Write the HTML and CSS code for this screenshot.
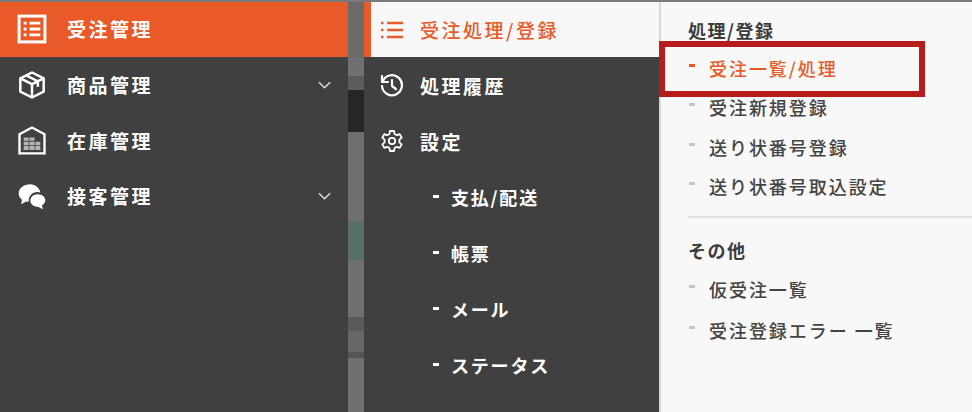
FILE: index.html
```html
<!DOCTYPE html>
<html lang="ja">
<head>
    <meta charset="UTF-8">
    <title>受注管理メニュー</title>
    <link rel="stylesheet" href="styles.css">
</head>
<body>
    <div class="menu">
        <div class="main-nav">
            <div class="main-item active">
                <svg class="main-icon" viewBox="0 0 36 36" fill="none" stroke="currentColor">
                    <rect x="2.500" y="2.500" width="31" height="31" stroke-width="3.600"/>
                    <path d="M8 11h3.500M15 11h13M8 18h3.500M15 18h13M8 25h3.500M15 25h13" stroke-width="3.400"/>
                </svg>
                <span>受注管理</span>
            </div>
            <div class="main-item">
                <svg class="main-icon" viewBox="0 0 36 36" fill="none" stroke="currentColor" stroke-width="3" stroke-linejoin="round">
                    <path d="M18 3 32 10V26L18 33 4 26V10Z"/>
                    <path d="M4 10 18 17 32 10M18 17V33M11 6.500 25 13.500V20"/>
                </svg>
                <span>商品管理</span>
                <svg class="chevron" viewBox="0 0 14 8" fill="none" stroke="currentColor" stroke-width="1.500"><path d="M1 1l6 6 6-6"/></svg>
            </div>
            <div class="main-item">
                <svg class="main-icon" viewBox="0 0 36 36" fill="none">
                    <path d="M3 34V11L18 3 33 11V34Z" stroke="currentColor" stroke-width="2.800"/>
                    <path d="M8 15h6v4H8zM15 15h6v4h-6zM8 20h6v4H8zM15 20h6v4h-6zM22 20h6v4h-6zM8 25h6v5H8zM15 25h6v5h-6zM22 25h6v5h-6z" fill="#b5b5b5"/>
                </svg>
                <span>在庫管理</span>
            </div>
            <div class="main-item">
                <svg class="main-icon" viewBox="0 0 36 36" fill="currentColor">
                    <path d="M16 4C8 4 2 9 2 15c0 3 1.500 5.600 4 7.500L5 28l6-3.500c1 .2 1.600.3 3 .3-.6-7 5-12 11-11.500 1 0 2 .2 3 .6C27 8.500 22 4 16 4Z"/>
                    <path d="M25 16c-5 0-9 3.300-9 7.500S20 31 25 31l6 3-1-5c2.500-1.300 4-3.300 4-5.500 0-4.200-4-7.500-9-7.500Z"/>
                </svg>
                <span>接客管理</span>
                <svg class="chevron" viewBox="0 0 14 8" fill="none" stroke="currentColor" stroke-width="1.500"><path d="M1 1l6 6 6-6"/></svg>
            </div>
        </div>

        <div class="strip">
            <div class="seg seg-a"></div>
            <div class="seg seg-b"></div>
            <div class="seg seg-c"></div>
            <div class="seg seg-d"></div>
            <div class="seg seg-e"></div>
            <div class="seg seg-f"></div>
            <div class="seg seg-g"></div>
            <div class="seg seg-h"></div>
            <div class="seg seg-i"></div>
            <div class="seg seg-j"></div>
            <div class="seg seg-k"></div>
        </div>

        <div class="sub-nav">
            <div class="sub-item active">
                <svg class="sub-icon" viewBox="0 0 24 24" fill="none" stroke="currentColor" stroke-width="2.400">
                    <path d="M1 5h2.500M1 12h2.500M1 19h2.500M7 5h16M7 12h16M7 19h16"/>
                </svg>
                <span>受注処理/登録</span>
            </div>
            <div class="sub-item">
                <svg class="sub-icon" viewBox="0 0 24 24" fill="none" stroke="currentColor" stroke-width="2.200" stroke-linecap="round" stroke-linejoin="round">
                    <path d="M2 3v6h6"/>
                    <path d="M2.500 9A10 10 0 1 1 2 13"/>
                    <path d="M12 7v6l4 3"/>
                </svg>
                <span>処理履歴</span>
            </div>
            <div class="sub-item">
                <svg class="sub-icon" viewBox="0 0 24 24" fill="none" stroke="currentColor" stroke-width="1.800" stroke-linejoin="round">
                    <circle cx="12" cy="12" r="3.200"/>
                    <path d="M10 2h4l.6 3 2.200 1.200 2.900-1 2 3.400-2.300 2 0 2.800 2.300 2-2 3.400-2.900-1-2.200 1.200-.6 3h-4l-.6-3-2.200-1.200-2.900 1-2-3.400 2.300-2 0-2.800-2.300-2 2-3.400 2.900 1L9.400 5Z"/>
                </svg>
                <span>設定</span>
            </div>
            <div class="sub-child"><i class="dash"></i><span>支払/配送</span></div>
            <div class="sub-child"><i class="dash"></i><span>帳票</span></div>
            <div class="sub-child"><i class="dash"></i><span>メール</span></div>
            <div class="sub-child"><i class="dash"></i><span>ステータス</span></div>
        </div>

        <div class="panel">
            <div class="group">
                <div class="group-title">処理/登録</div>
                <div class="link current"><i class="dash"></i><span>受注一覧/処理</span></div>
                <div class="link"><i class="dash"></i><span>受注新規登録</span></div>
                <div class="link"><i class="dash"></i><span>送り状番号登録</span></div>
                <div class="link"><i class="dash"></i><span>送り状番号取込設定</span></div>
            </div>
            <div class="group group-other">
                <div class="group-title">その他</div>
                <div class="link"><i class="dash"></i><span>仮受注一覧</span></div>
                <div class="link"><i class="dash"></i><span>受注登録エラー 一覧</span></div>
            </div>
            <div class="highlight"></div>
        </div>
    </div>
</body>
</html>
```

FILE: styles.css
```css
* {
    box-sizing: border-box;
}

body {
    margin: 0;
    width: 972px;
    height: 412px;
    overflow: hidden;
    font-family: "Noto Sans CJK JP", "Noto Sans", sans-serif;
    font-weight: 500;
}

.menu {
    display: flex;
    height: 412px;
    border-top: 2px solid #7a7a7a;
    background-color: #404040;
}

/* left column */
.main-nav {
    width: 348px;
    background-color: #404040;
    color: #ffffff;
}

.main-item {
    display: flex;
    align-items: center;
    height: 55.500px;
    padding: 0 17px;
    font-size: 19px;
    font-weight: 700;
    letter-spacing: 2.500px;
}

.main-item.active {
    height: 55px;
    padding-bottom: 2px;
    background-color: #e95a28;
}

.main-icon {
    width: 30px;
    height: 30px;
    margin-right: 20px;
    flex-shrink: 0;
}

.chevron {
    width: 13px;
    height: 8px;
    margin-left: auto;
    color: #dddddd;
}

/* page behind the menu, seen through the gap */
.strip {
    display: flex;
    flex-direction: column;
    width: 16px;
    flex-shrink: 0;
}

.seg-a { height: 56px; background-color: #6b6b6b; }
.seg-b { height: 18px; background-color: #707070; }
.seg-c { height: 14px; background-color: #5c5c5c; }
.seg-d { height: 42px; background-color: #262626; }
.seg-e { height: 90px; background-color: #6f6f6f; }
.seg-f { height: 38px; background-color: #566f6a; }
.seg-g { height: 57px; background-color: #707070; }
.seg-h { height: 14px; background-color: #5a5a5a; }
.seg-i { height: 21px; background-color: #676767; }
.seg-j { height: 6px; background-color: #555555; }
.seg-k { flex: 1; background-color: #707070; }

/* middle column */
.sub-nav {
    width: 295px;
    flex-shrink: 0;
    color: #ffffff;
    font-size: 19px;
    font-weight: 700;
    letter-spacing: 2.500px;
}

.sub-item {
    display: flex;
    align-items: center;
    height: 56px;
    padding-left: 16px;
}

.sub-item.active {
    height: 55px;
    padding-left: 9px;
    border-left: 7px solid #e95a28;
    background-color: #f8f8f8;
    color: #e95a28;
    font-weight: 500;
    letter-spacing: 2.500px;
}

.sub-icon {
    width: 24px;
    height: 24px;
    margin-right: 16px;
    flex-shrink: 0;
}

.sub-child {
    display: flex;
    align-items: center;
    height: 56px;
    padding-left: 68px;
    font-size: 18px;
    letter-spacing: 1.800px;
}

.sub-child .dash {
    background-color: #ffffff;
    margin: 0 12px 1px 1px;
}

.dash {
    display: block;
    width: 6px;
    height: 3px;
    flex-shrink: 0;
}

/* right panel */
.panel {
    position: relative;
    flex: 1;
    padding-left: 27px;
    border-left: 2px solid #d8d8d8;
    background-color: #f8f8f8;
    color: #444444;
    font-size: 18px;
    font-weight: 500;
    letter-spacing: 1.950px;
}

.group {
    padding-top: 15px;
}

.group-other {
    margin-top: 10px;
    padding-top: 19px;
    border-top: 2px solid #e0e0e0;
}

.group-title {
    height: 26px;
    margin-bottom: 5px;
    line-height: 26px;
    color: #3c3c3c;
    font-weight: 700;
    letter-spacing: 1.500px;
}

.link {
    display: flex;
    align-items: center;
    height: 39.500px;
}

.group-other .link {
    height: 41px;
}

.link .dash {
    background-color: #c4c4c4;
    margin: 0 14px 5px 1px;
}

.link.current {
    color: #e95a28;
}

.link.current .dash {
    background-color: #e95a28;
}

.highlight {
    position: absolute;
    left: -2px;
    top: 39px;
    width: 266px;
    height: 56px;
    border: 6px solid #b71c1c;
}
```
